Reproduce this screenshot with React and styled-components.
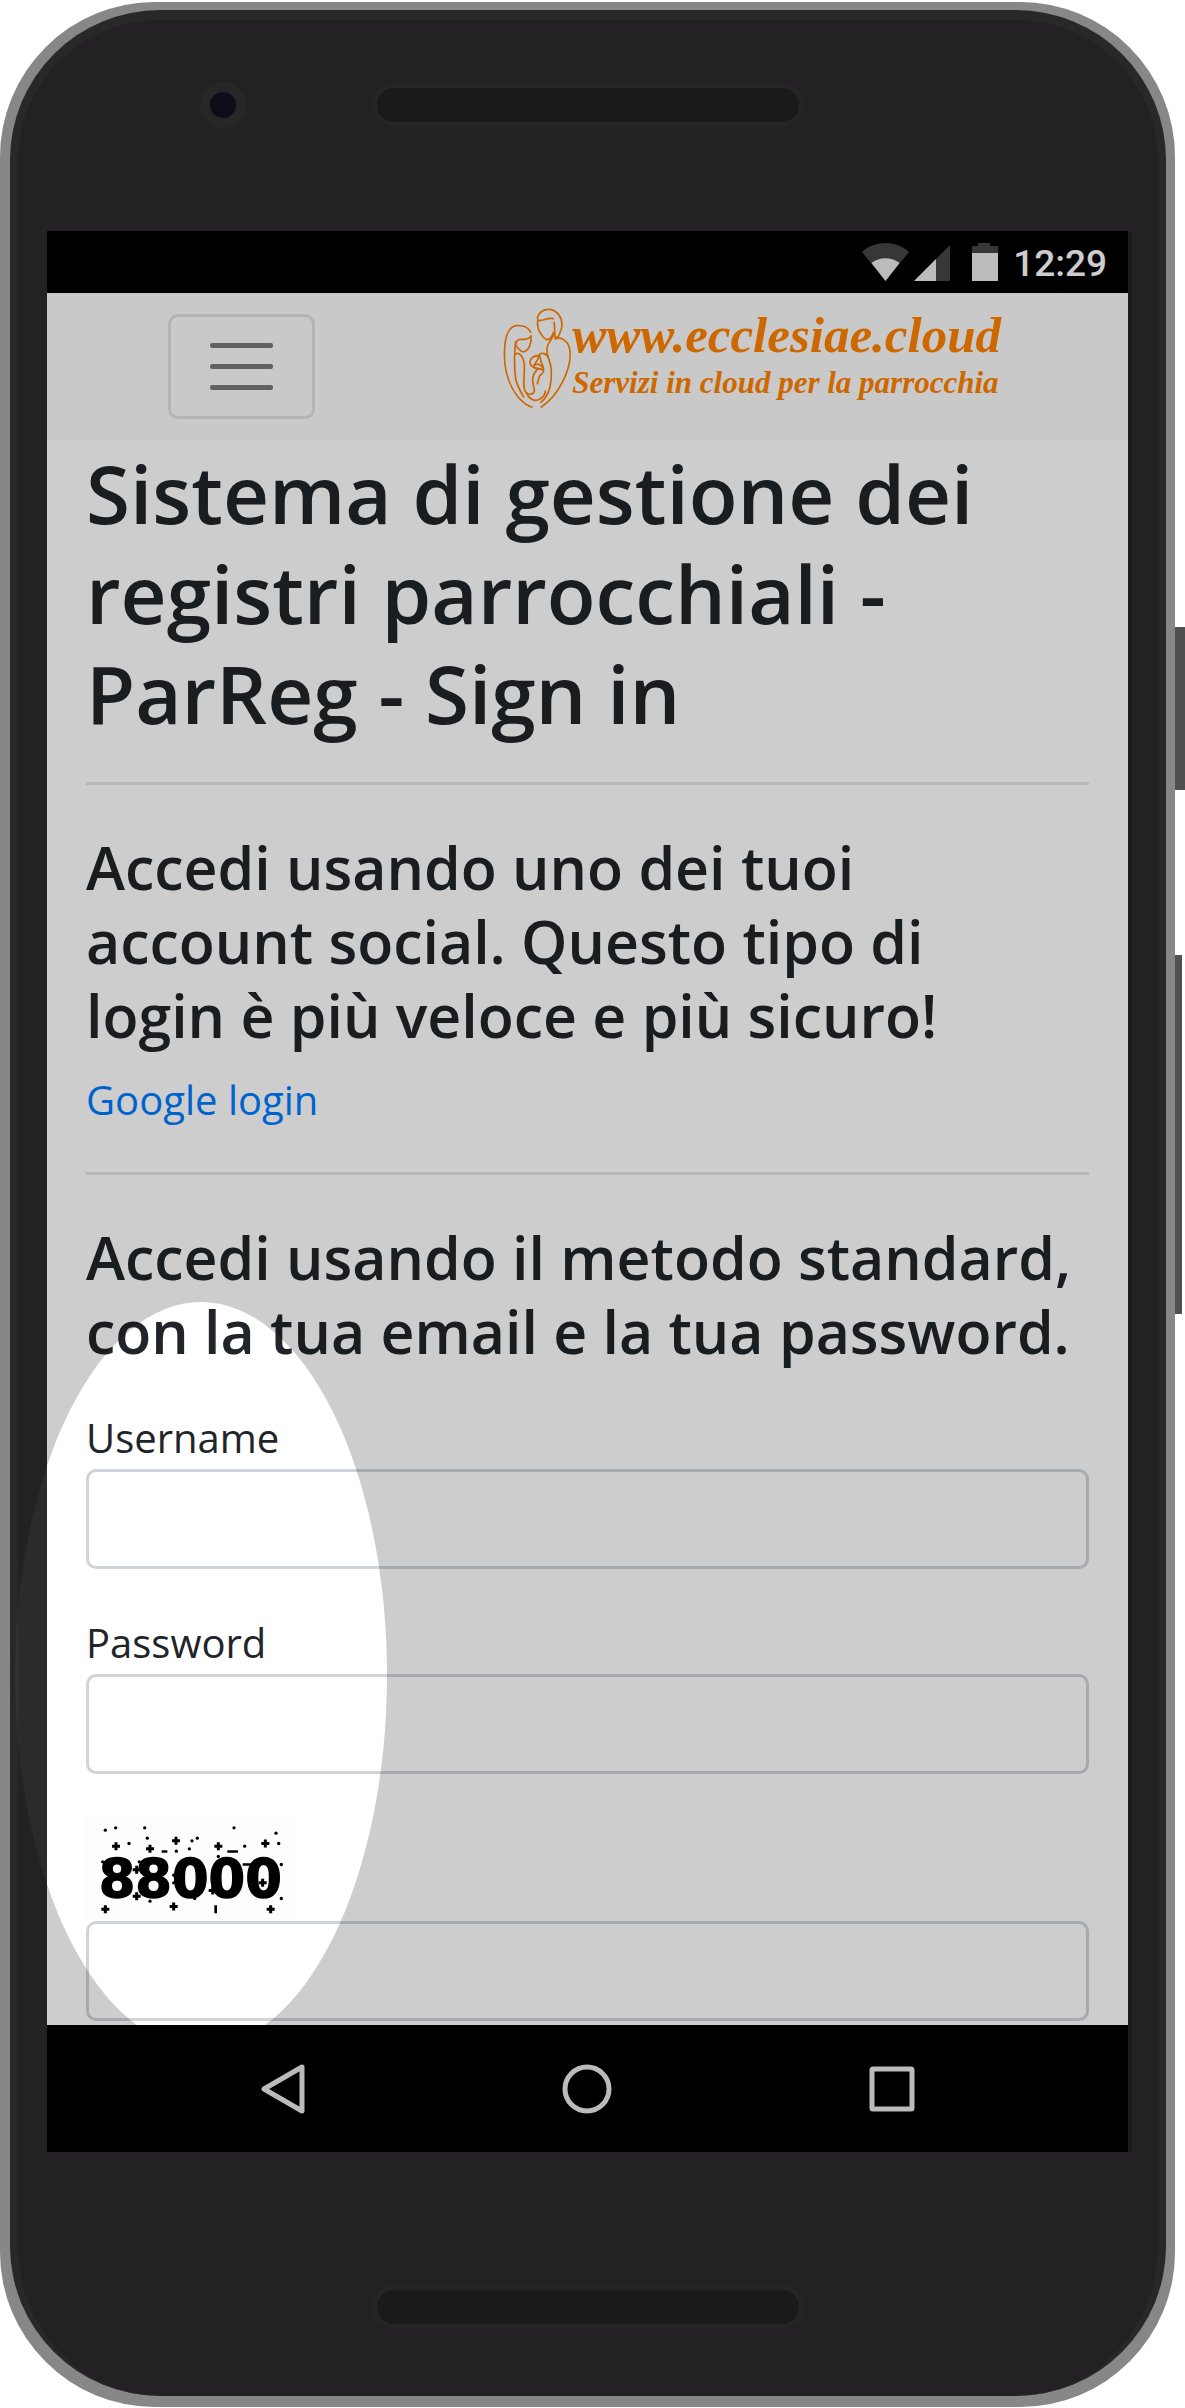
import styled, { createGlobalStyle } from 'styled-components'

const GlobalStyle = createGlobalStyle`
  *,
  *::before,
  *::after {
    box-sizing: border-box;
  }

  body {
    margin: 0;
    background-color: #fff;
    color: #212529;
    font-family: 'Open Sans', 'Noto Sans', sans-serif;
    font-size: 40px;
    line-height: 63px;
  }
`

const Page = styled.div`
  display: flex;
  padding: 2px 0 1px;
`

const Phone = styled.div`
  position: relative;
  flex: 1;
  min-width: 0;
  padding: 8px 9px 11px 10px;
  border-radius: 155px;
  overflow: hidden;

  background-color: #a8a8a8;
`

const Bezel = styled.div`
  border: solid #323232;
  border-width: 10px 8px 0;
  border-radius: 150px;

  background-color: #2d2a2d;
`

const SideKeys = styled.div`
  display: flex;
  flex-direction: column;
  gap: 165px;
  width: 10px;
  padding-top: 625px;
`

const SideKey = styled.div`
  width: ${({ $long }) => ($long ? '7' : '10')}px;
  height: ${({ $long }) => ($long ? '359' : '163')}px;

  background-color: #505050;
`

const TopBezel = styled.div`
  display: grid;
  grid-template-columns: 1fr auto 1fr;
  align-items: center;
  padding: 62px 0 103px;
`

const Camera = styled.div`
  justify-self: end;
  width: 46px;
  height: 46px;
  margin-right: 126px;
  border: 10px solid #313131;
  border-radius: 50%;

  background-color: #140f23;
`

const Speaker = styled.div`
  width: 432px;
  height: 44px;
  border: 5px solid #2f2f2f;
  border-radius: 22px;

  background-color: #212121;
`

const BottomBezel = styled.div`
  display: flex;
  justify-content: center;
  padding: 133px 0 67px;
`

const Screen = styled.div`
  margin: 0 26px 0 29px;
  border-right: 4px solid #222;

  background-color: #fff;
`

const StatusBar = styled.div`
  display: flex;
  align-items: center;
  justify-content: flex-end;
  gap: 15px;
  height: 62px;
  padding-right: 21px;

  background-color: #000;
`

const Clock = styled.span`
  padding-top: 4px;

  color: #fff;
  font-family: Roboto, sans-serif;
  font-size: 37px;
  font-weight: 500;
  line-height: 40px;
`

const Navbar = styled.header`
  display: flex;
  align-items: center;
  justify-content: space-between;
  min-height: 147px;
  padding: 0 127px 0 121px;

  background-color: #fafafa;
`

const Toggler = styled.button`
  display: flex;
  flex-direction: column;
  align-items: center;
  justify-content: center;
  gap: 16px;
  width: 147px;
  height: 105px;
  padding: 0;
  border: 3px solid rgba(0, 0, 0, 0.1);
  border-radius: 10px;

  cursor: pointer;
  background-color: transparent;
`

const TogglerBar = styled.span`
  width: 63px;
  height: 5px;
  border-radius: 2px;

  background-color: #7b7b7c;
`

const Brand = styled.a`
  display: flex;
  padding-bottom: 15px;

  color: #ff8000;
  font-family: 'Liberation Serif', serif;
  font-style: italic;
  font-weight: 700;
  text-decoration: none;
  white-space: nowrap;
`

const BrandText = styled.span`
  display: flex;
  flex-direction: column;
  gap: 5px;
  padding-top: 5px;
`

const BrandName = styled.span`
  font-size: 51px;
  line-height: 50px;
`

const BrandTagline = styled.span`
  font-size: 31px;
  line-height: 36px;
`

const Content = styled.main`
  padding: 3px 39px 4px;
`

const Title = styled.h1`
  margin: 0;
  font-size: 80px;
  font-weight: 600;
  line-height: 100px;
`

const Subtitle = styled.h4`
  margin: 0;
  font-size: 59px;
  font-weight: 600;
  line-height: 74px;
`

const Divider = styled.hr`
  height: 3px;
  margin: 39px 0 45px;
  border: 0;

  background-color: rgba(0, 0, 0, 0.1);
`

const SocialLink = styled.a`
  display: block;
  width: fit-content;
  padding: 16px 0 2px;

  color: #007bff;
  text-decoration: none;
`

const Form = styled.form`
  display: flex;
  flex-direction: column;
  gap: 42px;
  margin-top: 38px;
`

const Group = styled.div`
  display: flex;
  flex-direction: column;
`

const Label = styled.label`
  width: fit-content;
`

const Control = styled.input`
  width: 100%;
  height: 100px;
  padding: 16px 32px;
  border: 3px solid #ced4da;
  border-radius: 10px;

  background-color: #fff;
  color: #495057;
  font: inherit;
`

const Captcha = styled.svg`
  display: block;
  width: 210px;
  height: 105px;
`

const NavigationBar = styled.nav`
  display: grid;
  grid-template-columns: repeat(3, 1fr);
  height: 127px;
  padding: 0 84px;

  background-color: #000;
`

const NavigationButton = styled.button`
  display: flex;
  align-items: center;
  justify-content: center;
  padding: 0;
  border: 0;

  cursor: pointer;
  background: none;
  color: #e9e9e9;
`

// Dims the whole phone except for the ellipse itself
const Spotlight = styled.div`
  position: absolute;
  top: 1300px;
  left: 15px;
  width: 372px;
  height: 746px;
  border-radius: 50%;

  box-shadow: 0 0 0 3000px rgba(0, 0, 0, 0.196);
  pointer-events: none;
`

const crosses = [
  [170, 167],
  [272, 175],
  [350, 151],
  [477, 167],
  [618, 159],
  [232, 238],
  [232, 317],
  [138, 356],
  [343, 348],
  [634, 356],
  [460, 300],
  [610, 277],
]

const dots = [
  [138, 119],
  [169, 112],
  [256, 112],
  [264, 143],
  [209, 159],
  [398, 151],
  [414, 143],
  [390, 175],
  [351, 182],
  [524, 112],
  [556, 167],
  [650, 128],
  [658, 159],
  [477, 198],
  [130, 214],
  [240, 214],
  [343, 254],
  [343, 277],
  [272, 332],
  [406, 324],
  [666, 222],
  [666, 324],
]

function StatusIcons() {
  return (
    <svg width="136" height="38" viewBox="0 0 136 38" fill="#e9e9e9">
      <path d="M0 9 C13 -3 34 -3 47 9 L23.500 38 Z" fill="#454545" />
      <path d="M9.500 20 C17 13.500 30 13.500 37.500 20 L23.500 38 Z" />
      <path d="M88 2 V38 H52 Z" fill="#454545" />
      <path d="M74 16 V38 H52 Z" />
      <path d="M110 3 H116 V0 H128 V3 H136 V10 H110 Z" fill="#454545" />
      <path d="M110 10 H136 V38 H110 Z" />
    </svg>
  )
}

function FamilyLogo() {
  return (
    <svg
      width="72"
      height="108"
      viewBox="0 0 216 324"
      fill="none"
      stroke="currentColor"
      strokeWidth="5"
      strokeLinecap="round"
      strokeLinejoin="round"
    >
      <path d="M92 82 C84 66 66 60 48 62 C26 66 16 90 14 130 C10 190 26 240 54 276 C70 294 84 304 96 306" />
      <path d="M49 113 C53 99 62 104 72 103 C82 103 90 98 93 92 C96 116 86 138 70 141 C58 138 52 128 46 118" />
      <path d="M47 110 C42 150 42 180 47 222 C52 244 62 260 71 276" />
      <path d="M47 147 C56 141 70 151 73 180 C74 220 66 250 78 263 C86 270 100 270 103 258 C104 246 97 240 98 224 C98 206 106 200 114 192" />
      <path d="M112 38 C118 20 132 12 150 13 C174 18 186 38 186 60 C186 80 176 86 172 101" />
      <path d="M113 46 C128 50 142 36 160 41" />
      <path d="M114 42 C110 62 116 80 124 88 C130 98 138 104 144 104 C152 100 158 92 160 82" />
      <path d="M162 52 C166 66 162 82 166 102 C170 92 174 98 182 100" />
      <path d="M182 100 C194 104 202 112 207 124 C216 155 208 190 188 230 C172 262 148 290 124 306" />
      <path d="M160 90 C156 108 142 110 141 130 C140 142 141 148 144 154" />
      <path d="M118 148 C124 142 140 144 146 160 C158 190 156 216 150 246 C146 264 138 280 122 292" />
      <path d="M106 190 C92 184 86 174 92 164 C98 154 108 152 116 152 C116 168 104 172 102 182 C112 174 122 178 128 188" />
      <path d="M118 150 C124 162 120 168 126 176 C132 190 134 200 126 206 C114 212 118 222 112 236" />
      <path d="M104 188 L128 194" />
      <path d="M80 264 C86 282 104 292 120 282 C130 276 136 268 136 258" />
    </svg>
  )
}

function CaptchaImage() {
  return (
    <Captcha viewBox="80 78 630 312" role="img" aria-label="88000">
      <rect x="80" y="78" width="630" height="312" fill="#fdfdfd" />
      <text
        x="118"
        y="319"
        fontFamily="'DejaVu Sans', sans-serif"
        fontSize="158"
        fontWeight="700"
        stroke="#000"
        strokeWidth="4"
      >
        88000
      </text>
      {crosses.map(([x, y]) => (
        <path
          key={`${x}-${y}`}
          d={`M${x - 12} ${y} h24 M${x} ${y - 12} v24`}
          stroke="#000"
          strokeWidth="9"
        />
      ))}
      {dots.map(([x, y]) => (
        <circle key={`${x}-${y}`} cx={x} cy={y} r="5" />
      ))}
      <path
        d="M307 183 H324 M504 183 H536 M550 222 H576 M469 344 V368"
        stroke="#000"
        strokeWidth="8"
      />
    </Captcha>
  )
}

function Field({ id, label, type }) {
  return (
    <Group>
      <Label htmlFor={id}>{label}</Label>
      <Control id={id} name={id} type={type} />
    </Group>
  )
}

function App() {
  return (
    <>
      <GlobalStyle />
      <Page>
        <Phone>
          <Bezel>
            <TopBezel>
              <Camera />
              <Speaker />
            </TopBezel>
            <Screen>
              <StatusBar>
                <StatusIcons />
                <Clock>12:29</Clock>
              </StatusBar>
              <Navbar>
                <Toggler type="button" aria-label="Menu">
                  <TogglerBar />
                  <TogglerBar />
                  <TogglerBar />
                </Toggler>
                <Brand href="#">
                  <FamilyLogo />
                  <BrandText>
                    <BrandName>www.ecclesiae.cloud</BrandName>
                    <BrandTagline>Servizi in cloud per la parrocchia</BrandTagline>
                  </BrandText>
                </Brand>
              </Navbar>
              <Content>
                <Title>Sistema di gestione dei registri parrocchiali - ParReg - Sign in</Title>
                <Divider />
                <Subtitle>
                  Accedi usando uno dei tuoi account social. Questo tipo di login&nbsp;è più veloce
                  e più sicuro!
                </Subtitle>
                <SocialLink href="#">Google login</SocialLink>
                <Divider />
                <Subtitle>
                  Accedi usando il metodo standard, con la tua email e la tua password.
                </Subtitle>
                <Form>
                  <Field id="username" label="Username" type="text" />
                  <Field id="password" label="Password" type="password" />
                  <Group>
                    <CaptchaImage />
                    <Control name="captcha" type="text" aria-label="Captcha" />
                  </Group>
                </Form>
              </Content>
              <NavigationBar>
                <NavigationButton type="button" aria-label="Indietro">
                  <svg width="50" height="50" viewBox="0 0 50 50">
                    <path
                      d="M44 3 V47 L6 25 Z"
                      fill="none"
                      stroke="currentColor"
                      strokeWidth="5"
                      strokeLinejoin="round"
                    />
                  </svg>
                </NavigationButton>
                <NavigationButton type="button" aria-label="Home">
                  <svg width="50" height="50" viewBox="0 0 50 50">
                    <circle cx="25" cy="25" r="22" fill="none" stroke="currentColor" strokeWidth="5" />
                  </svg>
                </NavigationButton>
                <NavigationButton type="button" aria-label="Recenti">
                  <svg width="50" height="50" viewBox="0 0 50 50">
                    <rect
                      x="5"
                      y="5"
                      width="40"
                      height="40"
                      rx="1"
                      fill="none"
                      stroke="currentColor"
                      strokeWidth="5"
                    />
                  </svg>
                </NavigationButton>
              </NavigationBar>
            </Screen>
            <BottomBezel>
              <Speaker />
            </BottomBezel>
          </Bezel>
          <Spotlight />
        </Phone>
        <SideKeys>
          <SideKey />
          <SideKey $long />
        </SideKeys>
      </Page>
    </>
  )
}

export default App
